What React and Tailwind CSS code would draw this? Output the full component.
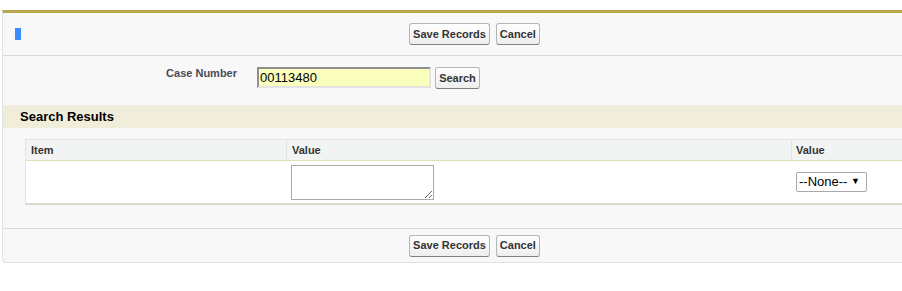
import React from "react";

function Btn({ children, className = "" }) {
  return (
    <button
      type="button"
      className={
        "h-[22px] px-[3px] rounded-[3px] border border-[#b5b5b5] border-b-[#7f7f7f] bg-gradient-to-b from-[#ffffff] to-[#eeeeee] text-[11px] leading-[13px] font-bold text-[#333333] font-['Liberation_Sans',Arial,sans-serif] " +
        className
      }
    >
      {children}
    </button>
  );
}

export default function App() {
  return (
    <div className="w-[902px] h-[291px] overflow-hidden bg-white font-['Liberation_Sans',Arial,sans-serif]">
      <div className="pt-[10px] pl-[2px]">
        <div className="w-[945px] bg-[#f8f8f8] border-t-[3px] border-t-[#b9a74f] border-x border-b border-x-[#e0e3e5] border-b-[#e0e3e5] rounded-b-[4px]">
          {/* top button bar */}
          <div className="h-[43px] grid grid-cols-[1fr_auto_1fr] items-center border-b border-[#dbdbdb]">
            <div className="pl-[12px] flex items-center">
              <div className="w-[6px] h-[12px] bg-[#3b8cff]" />
            </div>
            <div className="flex gap-[6px]">
              <Btn>Save Records</Btn>
              <Btn>Cancel</Btn>
            </div>
            <div />
          </div>

          {/* case number row */}
          <div className="pt-[11px] pb-[16px] flex items-start">
            <div className="w-[234px] text-right text-[11px] leading-[13px] font-bold text-[#4a4a56]">
              Case Number
            </div>
            <input
              type="text"
              readOnly
              value="00113480"
              className="ml-[20px] w-[174px] h-[21px] bg-[#faffbd] border-2 border-t-[#8f8f8f] border-l-[#8f8f8f] border-b-[#e3e3e3] border-r-[#e3e3e3] px-[1px] text-[13px] text-black outline-none font-['Liberation_Sans',Arial,sans-serif]"
            />
            <Btn className="ml-[4px] w-[45px]">Search</Btn>
          </div>

          {/* section header */}
          <div className="h-[23px] bg-[#f0eedb] pl-[17px] flex items-center text-[13px] font-bold text-black">
            Search Results
          </div>

          {/* table */}
          <div className="pt-[11px] px-[22px]">
            <div className="border border-[#e0e3e5] border-b-[#d7d7d7] bg-white">
              <div className="grid grid-cols-[261px_505px_1fr] bg-[#f2f3f3] border-b border-[#e3deb8] h-[21px] items-center text-[11px] font-bold text-[#333333]">
                <div className="h-full flex items-center pl-[5px] border-r border-[#e0e3e5]">Item</div>
                <div className="h-full flex items-center pl-[5px] border-r border-[#e0e3e5]">Value</div>
                <div className="h-full flex items-center pl-[4px]">Value</div>
              </div>
              <div className="grid grid-cols-[261px_505px_1fr] h-[43px] items-center border-b border-[#e3deb8]">
                <div />
                <div className="pl-[4px]">
                  <textarea
                    readOnly
                    className="block w-[143px] h-[35px] border border-[#a9a9a9] bg-white resize-y"
                  />
                </div>
                <div className="pl-[4px]">
                  <div className="w-[71px] h-[20px] border border-[#a9a9a9] rounded-[2px] bg-white flex items-center justify-between pl-[2px] pr-[6px] text-[13px] text-black">
                    <span>--None--</span>
                    <span className="text-[9px]">▼</span>
                  </div>
                </div>
              </div>
            </div>
          </div>

          {/* bottom spacer */}
          <div className="h-[24px] border-b border-[#dbdbdb]" />

          {/* bottom button bar */}
          <div className="h-[33px] flex items-center justify-center gap-[6px]">
            <Btn>Save Records</Btn>
            <Btn>Cancel</Btn>
          </div>
        </div>
      </div>
    </div>
  );
}
